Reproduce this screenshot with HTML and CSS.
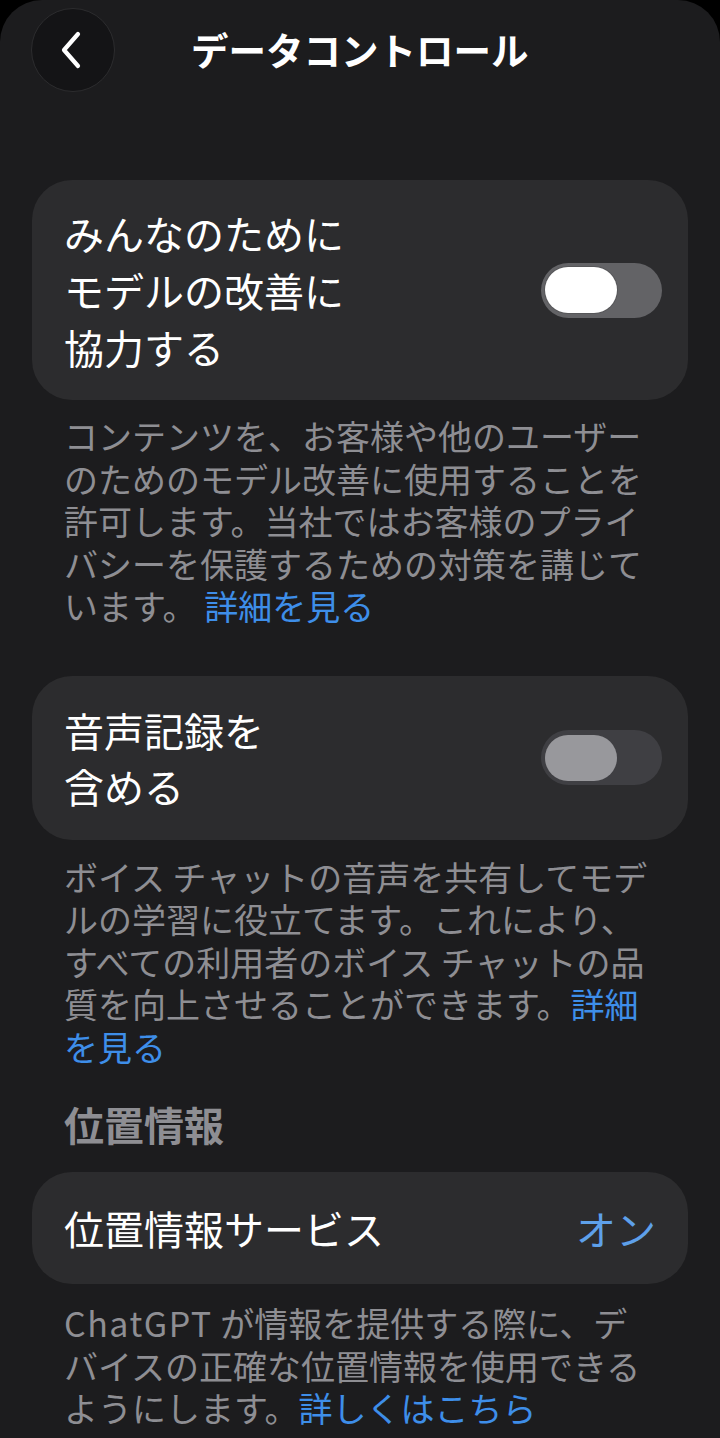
FILE: index.html
```html
<!DOCTYPE html>
<html lang="ja">
<head>
<meta charset="utf-8">
<title>データコントロール</title>
<link rel="stylesheet" href="styles.css">
</head>
<body>
<div class="sheet">
  <header class="topbar">
    <button class="back" aria-label="戻る">
      <svg width="24" height="40" viewBox="0 0 24 40"><path d="M19 4 L5 20 L19 36" fill="none" stroke="#fff" stroke-width="4.2" stroke-linecap="round" stroke-linejoin="round"/></svg>
    </button>
    <h1 class="title">データコントロール</h1>
  </header>

  <main class="content">
    <section class="card card-toggle first">
      <div class="label">みんなのために<br>モデルの改善に<br>協力する</div>
      <div class="switch on"><span class="knob"></span></div>
    </section>
    <p class="desc">コンテンツを、お客様や他のユーザーのためのモデル改善に使用することを許可します。当社ではお客様のプライバシーを保護するための対策を講じています。 <a class="link">詳細を見る</a></p>

    <section class="card card-toggle second">
      <div class="label">音声記録を<br>含める</div>
      <div class="switch off"><span class="knob"></span></div>
    </section>
    <p class="desc">ボイス チャットの音声を共有してモデルの学習に役立てます。これにより、すべての利用者のボイス チャットの品質を向上させることができます。<a class="link">詳細を見る</a></p>

    <h2 class="section-title">位置情報</h2>
    <section class="card card-row">
      <div class="label">位置情報サービス</div>
      <div class="value">オン</div>
    </section>
    <p class="desc last"><span class="latin">ChatGPT</span> が情報を提供する際に、デバイスの正確な位置情報を使用できるようにします。<a class="link">詳しくはこちら</a></p>
  </main>
</div>
</body>
</html>
```

FILE: styles.css
```css
* { box-sizing: border-box; }
html, body {
  margin: 0;
  padding: 0;
  background: #000;
}
body {
  font-family: "Noto Sans CJK JP", "Noto Sans", sans-serif;
  color: #fff;
  width: 720px;
  height: 1438px;
  overflow: hidden;
}
.sheet {
  background: #1c1c1e;
  border-radius: 42px 42px 0 0;
  min-height: 1438px;
}
.topbar {
  height: 100px;
  display: flex;
  align-items: center;
  padding-left: 31px;
}
.back {
  width: 84px;
  height: 84px;
  border-radius: 50%;
  background: #141416;
  border: 1.5px solid #2c2c2e;
  display: flex;
  align-items: center;
  justify-content: center;
  padding: 0 4px 0 0;
  margin-top: -1px;
}
.title {
  margin: -2px 0 0 76px;
  font-size: 37.5px;
  font-weight: 700;
  line-height: 1;
}
.content {
  padding: 80px 32px 0 32px;
  display: flex;
  flex-direction: column;
}
.card {
  background: #2c2c2e;
  border-radius: 40px;
  display: flex;
  align-items: center;
  justify-content: space-between;
}
.card .label {
  font-size: 40px;
  line-height: 57px;
  color: #fff;
}
.card-toggle.first { padding: 24.5px 26px 24.5px 32px; }
.card-toggle.second { padding: 26px 26px 26px 32px; }
.card-toggle.second .label { line-height: 56px; }
.card-row { padding: 28px 32px; }
.card-row .label { line-height: 56px; }
.switch {
  width: 121px;
  height: 55px;
  border-radius: 28px;
  padding: 4px;
  display: flex;
  align-items: center;
}
.switch .knob {
  width: 72px;
  height: 46px;
  border-radius: 23px;
  display: block;
}
.switch.on { background: #636366; }
.switch.on .knob { background: #fff; box-shadow: 0 0 0 1px rgba(0,0,0,0.12); }
.switch.off { background: #3f3f43; }
.switch.off .knob { background: #98989c; }
.value {
  font-size: 40px;
  line-height: 56px;
  color: #5ea0ea;
}
.desc {
  margin: 15px 32px 0 32px;
  font-size: 34px;
  line-height: 42.5px;
  color: #8e8e93;
}
.desc + .card { margin-top: 48px; }
.card-toggle.second + .desc { margin-top: 16px; }
.desc.last { margin-top: 18px; }
.latin { letter-spacing: 1.5px; }
.link { color: #3e8ee9; text-decoration: none; }
.section-title {
  margin: 28px 32px 20px 32px;
  font-size: 40px;
  line-height: 56px;
  font-weight: 700;
  color: #8e8e93;
}
```
